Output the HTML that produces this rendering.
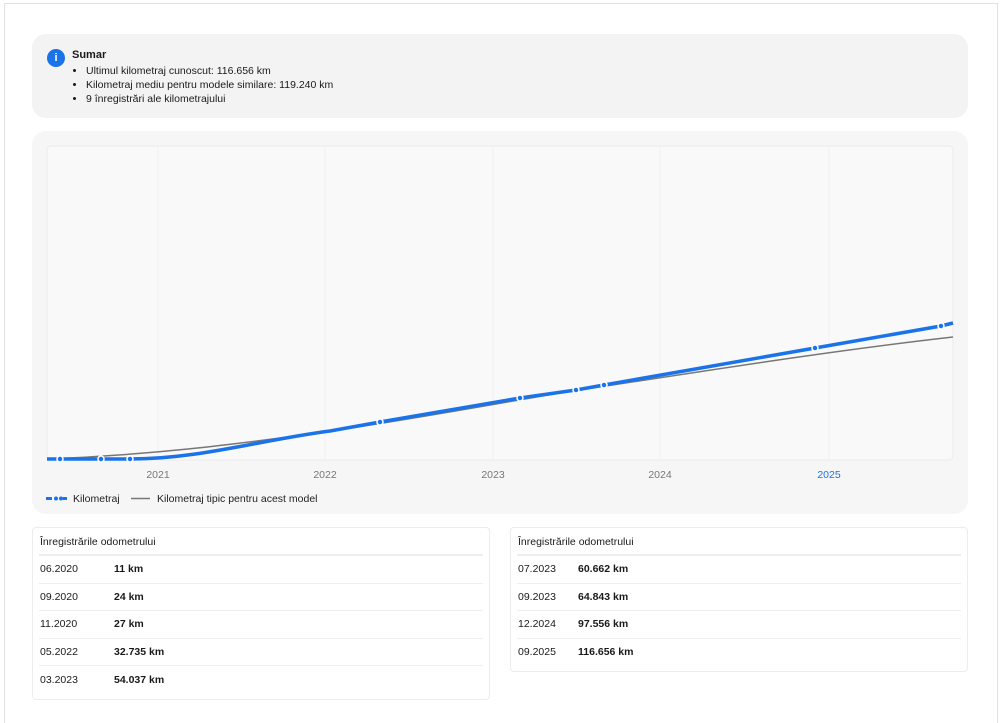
<!DOCTYPE html>
<html><head><meta charset="utf-8"><style>
*{box-sizing:border-box;margin:0;padding:0}
body{width:1000px;height:704px;overflow:hidden;background:#fff;font-family:"Liberation Sans",sans-serif;color:#1a1a1a;position:relative}
.frame{position:absolute;left:4px;top:3px;width:994px;height:720px;border:1px solid #e2e2e2;border-bottom:none}
.sum{position:absolute;left:32px;top:34px;width:936px;height:84px;background:#f3f3f3;border-radius:14px}
.icon{position:absolute;left:15px;top:15px;width:18px;height:18px;border-radius:50%;background:#1a73e8;color:#fff;font-size:11px;font-weight:bold;text-align:center;line-height:18px}
.sum h4{position:absolute;left:40px;top:15px;font-size:11px;font-weight:bold}
.sum ul{position:absolute;left:54px;top:30px;font-size:10.5px;line-height:14px}
.chart{position:absolute;left:32px;top:131px;width:936px;height:383px;background:#f6f6f6;border-radius:14px}
.tbl{position:absolute;top:527px;width:458px;border:1px solid #ececec;border-radius:4px;background:#fff;padding:0 6px}
.tbl .h{font-size:10.5px;height:28px;line-height:28px;border-bottom:2px solid #eee;padding-left:1px}
.tbl .r{height:27.5px;border-bottom:1.5px solid #eee;font-size:10.5px;display:flex;align-items:center;padding-left:1px}
.tbl .r:last-child{border-bottom:none}
.tbl .d{width:74px}.tbl .v{font-weight:bold}
</style></head><body>
<div class="frame"></div>
<div class="sum"><div class="icon">i</div><h4>Sumar</h4>
<ul><li>Ultimul kilometraj cunoscut: 116.656 km</li><li>Kilometraj mediu pentru modele similare: 119.240 km</li><li>9 înregistrări ale kilometrajului</li></ul></div>
<div class="chart"></div>
<svg style="position:absolute;left:0;top:0" width="1000" height="704">
<rect x="47" y="146" width="906" height="314" rx="4" fill="#f9f9f9" stroke="#ebebeb"/>
<g stroke="#f1f1f1" stroke-width="1"><line x1="158" y1="147" x2="158" y2="459"/><line x1="325" y1="147" x2="325" y2="459"/><line x1="493" y1="147" x2="493" y2="459"/><line x1="660" y1="147" x2="660" y2="459"/><line x1="829" y1="147" x2="829" y2="459"/></g>
<g font-family="Liberation Sans" font-size="10.5" fill="#777" text-anchor="middle"><text x="158" y="478">2021</text><text x="325" y="478">2022</text><text x="493" y="478">2023</text><text x="660" y="478">2024</text><text x="829" y="478" fill="#1a73e8">2025</text></g>
<path d="M47 459 C150 455 230 445 325 432 C420 418 500 403 560 393 C680 375 820 352 953 337" fill="none" stroke="#777" stroke-width="1.5"/>
<path d="M47 459 L130 459 C200 459 260 440 330 431 L380 422 L520 398 L576 390 L604 385 L815 348 L941 326 L953 323" fill="none" stroke="#1a73e8" stroke-width="3.5" stroke-linejoin="round"/>
<g fill="#1a73e8" stroke="#fff" stroke-width="1.5">
<circle cx="60" cy="459" r="3"/><circle cx="101" cy="459" r="3"/><circle cx="130" cy="459" r="3"/><circle cx="380" cy="422" r="3"/><circle cx="520" cy="398" r="3"/><circle cx="576" cy="390" r="3"/><circle cx="604" cy="385" r="3"/><circle cx="815" cy="348" r="3"/><circle cx="941" cy="326" r="3"/></g>
<g><rect x="46" y="497" width="6" height="3" fill="#1a73e8"/><circle cx="56" cy="498.5" r="2" fill="#1a73e8"/><circle cx="61" cy="498.5" r="2" fill="#1a73e8"/><rect x="63" y="497" width="4" height="3" fill="#1a73e8"/>
<line x1="131" y1="498.5" x2="150" y2="498.5" stroke="#777" stroke-width="1.5"/>
<text x="73" y="502" font-family="Liberation Sans" font-size="10.5" fill="#222">Kilometraj</text>
<text x="157" y="502" font-family="Liberation Sans" font-size="10.5" fill="#222">Kilometraj tipic pentru acest model</text></g>
</svg>
<div class="tbl" style="left:32px;height:173px"><div class="h">Înregistrările odometrului</div>
<div class="r"><span class="d">06.2020</span><span class="v">11 km</span></div>
<div class="r"><span class="d">09.2020</span><span class="v">24 km</span></div>
<div class="r"><span class="d">11.2020</span><span class="v">27 km</span></div>
<div class="r"><span class="d">05.2022</span><span class="v">32.735 km</span></div>
<div class="r"><span class="d">03.2023</span><span class="v">54.037 km</span></div></div>
<div class="tbl" style="left:510px;height:145px"><div class="h">Înregistrările odometrului</div>
<div class="r"><span class="d" style="width:60px">07.2023</span><span class="v">60.662 km</span></div>
<div class="r"><span class="d" style="width:60px">09.2023</span><span class="v">64.843 km</span></div>
<div class="r"><span class="d" style="width:60px">12.2024</span><span class="v">97.556 km</span></div>
<div class="r"><span class="d" style="width:60px">09.2025</span><span class="v">116.656 km</span></div></div>
</body></html>
